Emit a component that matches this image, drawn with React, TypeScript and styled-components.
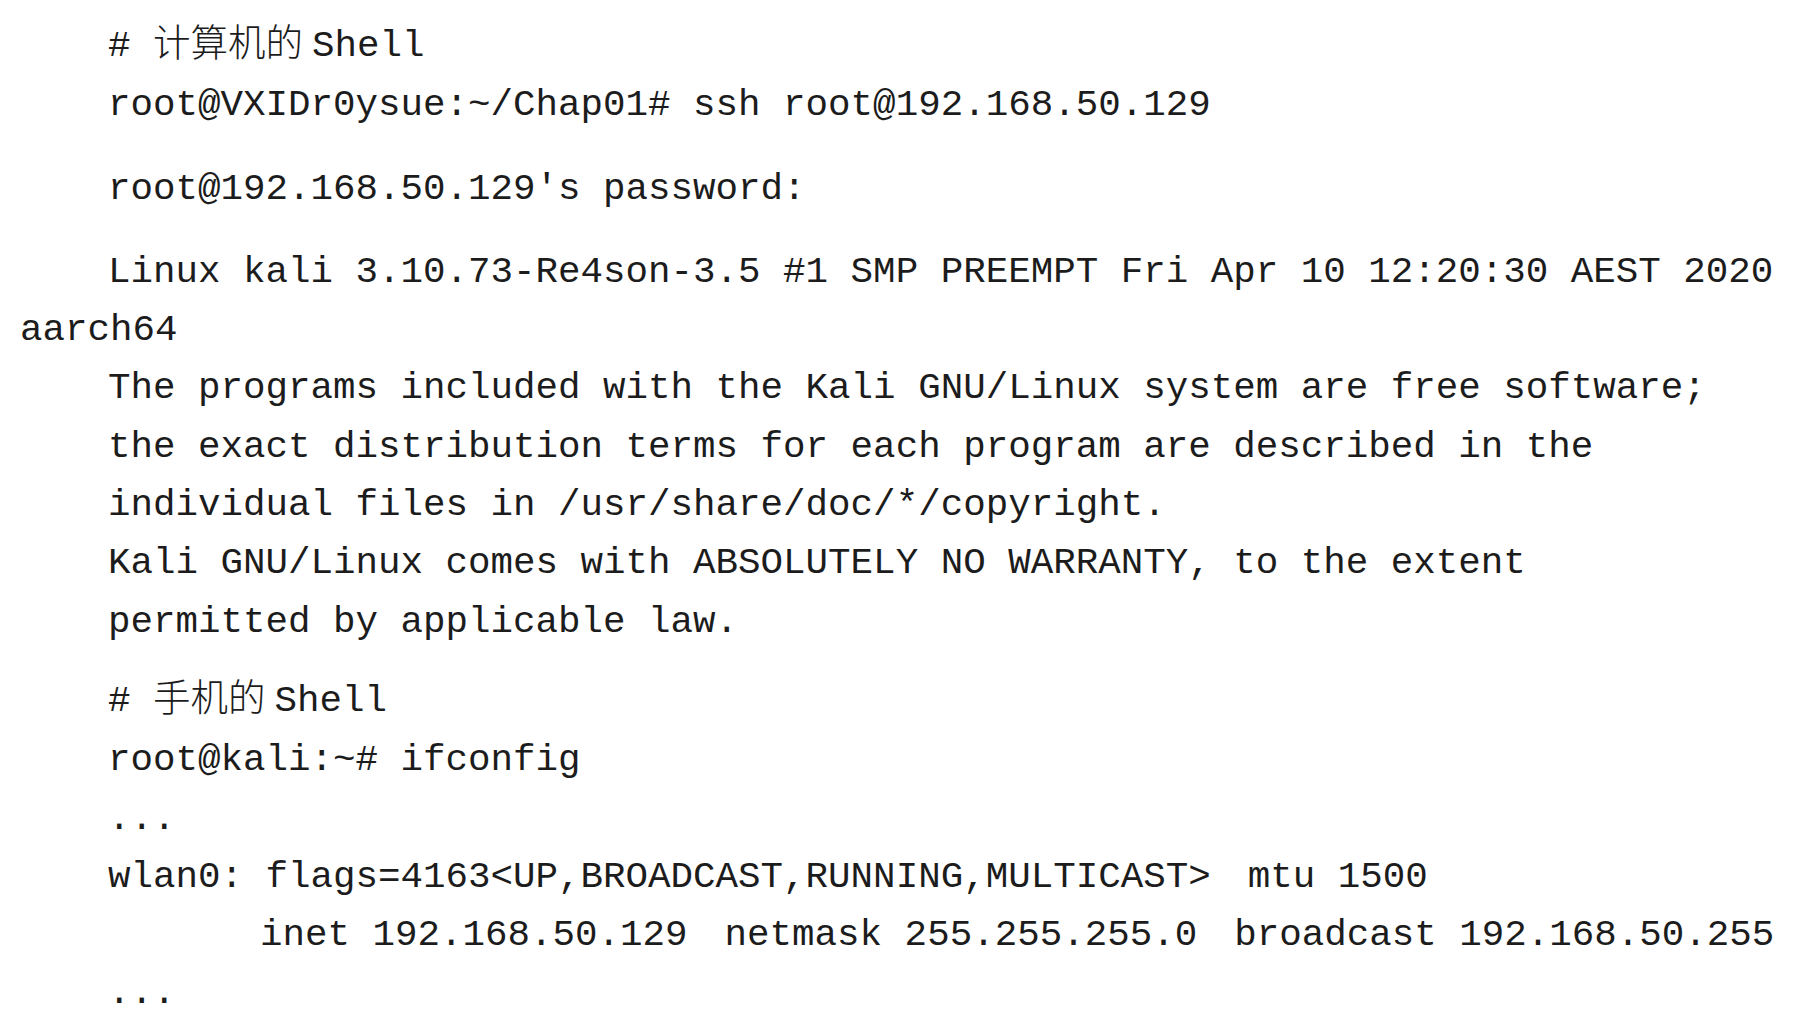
import React from "react";
import styled, { createGlobalStyle } from "styled-components";

const Global = createGlobalStyle`
  html, body {
    margin: 0;
    padding: 0;
    background: #ffffff;
  }
`;

const Page = styled.main`
  display: flex;
  flex-direction: column;
  padding: 17px 0 0 20px;
  width: 1794px;
  box-sizing: border-box;
  background: #ffffff;
`;

const Line = styled.p<{ $gap?: number; $indent?: number }>`
  margin: ${(p) => p.$gap ?? 0}px 0 0 0;
  font-family: "Liberation Mono", "Noto Sans CJK SC", monospace;
  font-size: 37.5px;
  line-height: 58.3px;
  color: #1c1c1c;
  white-space: pre-wrap;
  text-indent: ${(p) => p.$indent ?? 88}px;
`;

const Han = styled.span`
  font-family: "Noto Sans CJK SC", sans-serif;
  font-weight: 300;
  line-height: 1;
  margin-right: 9px;
`;

const Tight = styled.span`
  letter-spacing: -4px;
`;

export default function App() {
  return (
    <>
      <Global />
      <Page>
        <Line>
          # <Han>计算机的</Han>Shell
        </Line>
        <Line $gap={1}>root@VXIDr0ysue:~/Chap01# ssh root@192.168.50.129</Line>
        <Line $gap={25}>root@192.168.50.129's password:</Line>
        <Line $gap={25}>
          Linux kali 3.10.73-Re4son-3.5 #1 SMP PREEMPT Fri Apr 10 12:20:30 AEST 2020 aarch64
        </Line>
        <Line>The programs included with the Kali GNU/Linux system are free software;</Line>
        <Line>the exact distribution terms for each program are described in the</Line>
        <Line>individual files in /usr/share/doc/*/copyright.</Line>
        <Line>Kali GNU/Linux comes with ABSOLUTELY NO WARRANTY, to the extent</Line>
        <Line>permitted by applicable law.</Line>
        <Line $gap={21}>
          # <Han>手机的</Han>Shell
        </Line>
        <Line $gap={1}>root@kali:~# ifconfig</Line>
        <Line>...</Line>
        <Line>
          wlan0: flags=4163&lt;UP,BROADCAST,RUNNING,MULTICAST&gt;<Tight>  </Tight>mtu 1500
        </Line>
        <Line $indent={240}>
          inet 192.168.50.129<Tight>  </Tight>netmask 255.255.255.0<Tight>  </Tight>broadcast 192.168.50.255
        </Line>
        <Line>...</Line>
      </Page>
    </>
  );
}
